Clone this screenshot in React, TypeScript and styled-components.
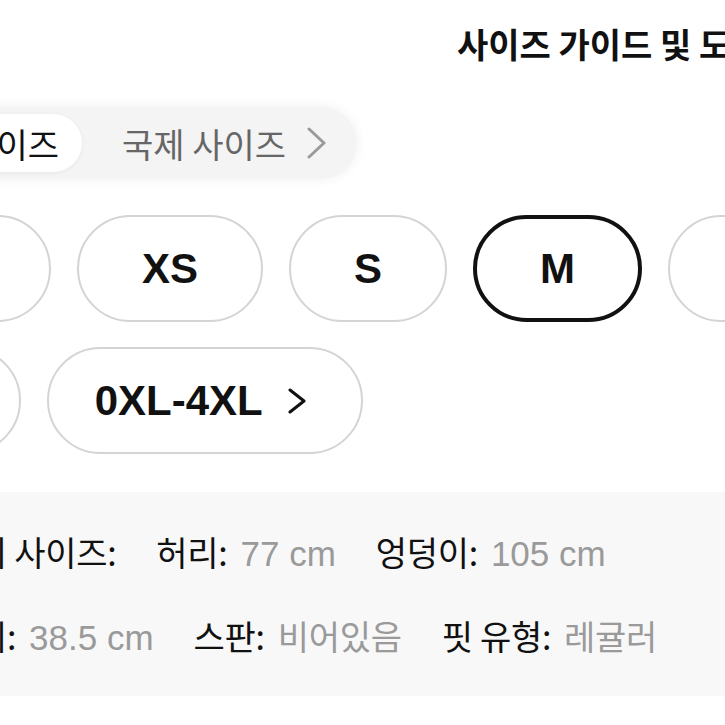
import React from 'react';
import styled, { createGlobalStyle } from 'styled-components';

const sizesTop = [
  { label: 'XXS' },
  { label: 'XS' },
  { label: 'S' },
  { label: 'M', selected: true },
  { label: 'L' },
];

const sizesBottom = [{ label: 'XL' }];

const measures = [
  [
    { label: '모델의 사이즈:' },
    { label: '허리:', value: '77 cm', latin: true },
    { label: '엉덩이:', value: '105 cm', latin: true },
  ],
  [
    { label: '허벅지:', value: '38.5 cm', latin: true },
    { label: '스판:', value: '비어있음' },
    { label: '핏 유형:', value: '레귤러' },
  ],
];

const Chevron = ({ color, w, h }: { color: string; w: number; h: number }) => (
  <svg width={w} height={h} viewBox={`0 0 ${w} ${h}`} fill="none">
    <path
      d={`M2 2 L${w - 3} ${h / 2} L2 ${h - 2}`}
      stroke={color}
      strokeWidth={3}
      strokeLinecap="round"
      strokeLinejoin="round"
    />
  </svg>
);

export default function App() {
  return (
    <Page>
      <GlobalStyle />
      <Title>사이즈 가이드 및 도움말</Title>

      <TabBar>
        <Tab $active>한국 사이즈</Tab>
        <Tab>
          국제 사이즈
          <Chevron color="#9a9a9a" w={20} h={32} />
        </Tab>
      </TabBar>

      <SizeGrid>
        <SizeRow>
          {sizesTop.map((s) => (
            <SizeButton key={s.label} $selected={s.selected}>
              {s.label}
            </SizeButton>
          ))}
        </SizeRow>
        <SizeRow>
          {sizesBottom.map((s) => (
            <SizeButton key={s.label}>{s.label}</SizeButton>
          ))}
          <SizeButton $more>
            0XL-4XL
            <Chevron color="#111" w={19} h={26} />
          </SizeButton>
        </SizeRow>
      </SizeGrid>

      <InfoPanel>
        {measures.map((line, i) => (
          <InfoLine key={i}>
            {line.map((m) => (
              <Item key={m.label}>
                <Label>{m.label}</Label>
                {m.value && <Value $latin={m.latin}>{m.value}</Value>}
              </Item>
            ))}
          </InfoLine>
        ))}
      </InfoPanel>
    </Page>
  );
}

/* ----- STYLES ----- */

const GlobalStyle = createGlobalStyle`
  html, body {
    margin: 0;
    padding: 0;
    background: #fff;
  }
  body {
    font-family: "Liberation Sans", "Noto Sans CJK KR", sans-serif;
    color: #111;
  }
`;

const Page = styled.div`
  width: 725px;
  height: 725px;
  overflow: hidden;
  background: #fff;
`;

const Title = styled.h1`
  margin: 0;
  padding: 23px 0 0 457px;
  font-family: "Noto Sans CJK KR", sans-serif;
  font-weight: 700;
  font-size: 34px;
  line-height: 41px;
  white-space: nowrap;
  color: #111;
`;

const TabBar = styled.div`
  display: inline-flex;
  align-items: center;
  gap: 17px;
  margin: 43px 0 0 -135px;
  padding: 7px;
  background: #f4f4f4;
  border-radius: 40px;
  box-shadow: 0 0 8px 3px #f6f6f6;
`;

const Tab = styled.div<{ $active?: boolean }>`
  display: flex;
  align-items: center;
  gap: 21px;
  height: 58px;
  padding: 0 23px;
  border-radius: 29px;
  white-space: nowrap;
  background: ${(p) => (p.$active ? '#fff' : 'transparent')};
  color: ${(p) => (p.$active ? '#111' : '#666')};
  box-shadow: ${(p) => (p.$active ? '0 1px 5px rgba(0, 0, 0, 0.05)' : 'none')};
  font-family: "Noto Sans CJK KR", sans-serif;
  font-size: 34px;
`;

const SizeGrid = styled.div`
  display: flex;
  flex-direction: column;
  gap: 25px;
  margin: 36px 0 0 -163px;
`;

const SizeRow = styled.div`
  display: flex;
  gap: 26px;
`;

const SizeButton = styled.div<{ $selected?: boolean; $more?: boolean }>`
  flex: none;
  display: flex;
  align-items: center;
  justify-content: center;
  gap: 25px;
  box-sizing: border-box;
  height: 107px;
  padding: ${(p) => (p.$more ? '0 54px 0 46px' : '0 63px')};
  border: ${(p) => (p.$selected ? '4px solid #111' : '2px solid #d4d4d4')};
  border-radius: 54px;
  background: #fff;
  font-family: "Liberation Sans", Arial, sans-serif;
  font-weight: 700;
  font-size: 42px;
  color: #111;
  white-space: nowrap;
`;

const InfoPanel = styled.div`
  display: flex;
  flex-direction: column;
  gap: 44px;
  margin-top: 38px;
  padding: 40px 0;
  background: #f8f8f8;
`;

const InfoLine = styled.div`
  display: flex;
  align-items: baseline;
  gap: 40px;
  margin-left: -86px;
  height: 40px;
  line-height: 40px;
  white-space: nowrap;
`;

const Item = styled.div`
  display: flex;
  align-items: baseline;
  gap: 13px;
`;

const Label = styled.span`
  font-family: "Noto Sans CJK KR", sans-serif;
  font-size: 34px;
  letter-spacing: -0.3px;
  color: #111;
`;

const Value = styled.span<{ $latin?: boolean }>`
  font-family: ${(p) =>
    p.$latin ? '"Liberation Sans", Arial, sans-serif' : '"Noto Sans CJK KR", sans-serif'};
  font-size: ${(p) => (p.$latin ? '35px' : '34px')};
  letter-spacing: ${(p) => (p.$latin ? '0' : '-0.3px')};
  color: #9a9a9a;
`;
